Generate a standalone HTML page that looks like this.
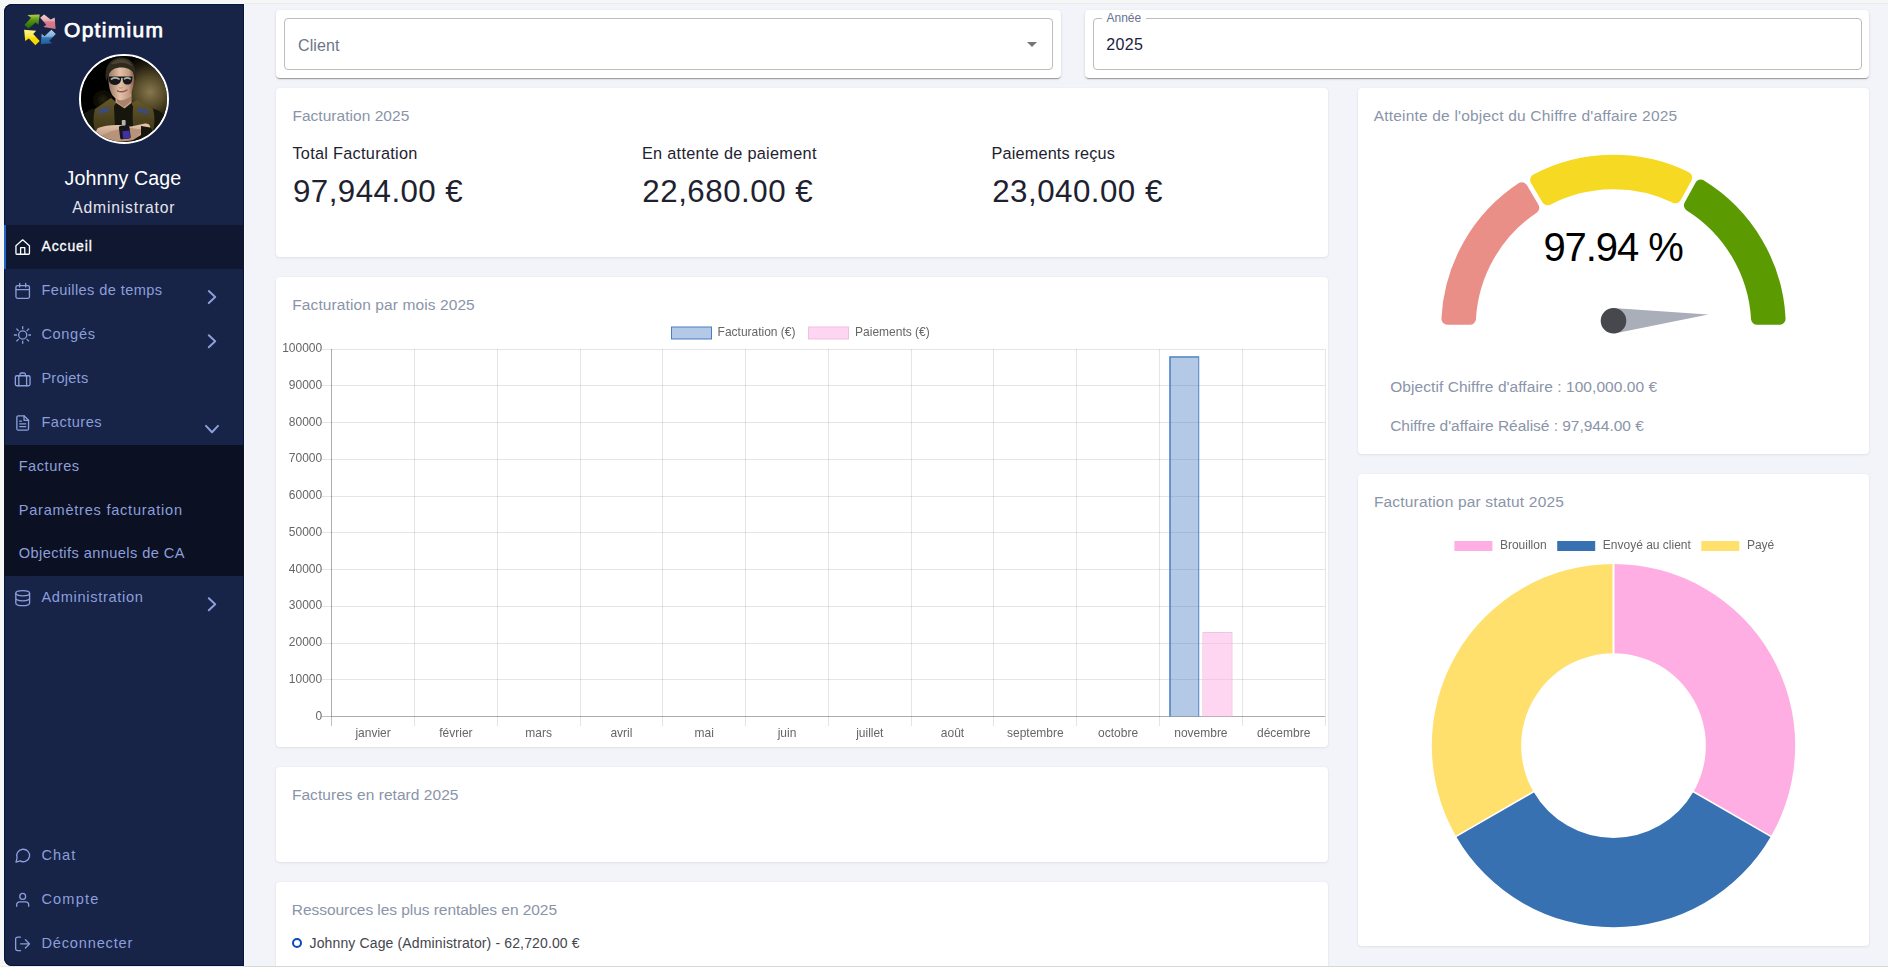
<!DOCTYPE html>
<html lang="fr">
<head>
<meta charset="utf-8">
<title>Optimium - Accueil</title>
<style>
*{box-sizing:border-box;margin:0;padding:0}
html,body{width:1888px;height:967px;overflow:hidden}
body{position:relative;background:#f6f6f6;font-family:"Liberation Sans",sans-serif;-webkit-font-smoothing:antialiased}
.page{position:absolute;left:245px;top:4px;width:1643px;height:962px;background:#f2f4f9}
.topline{position:absolute;left:244px;top:3px;width:1644px;height:1px;background:#ececee}
.sideline{position:absolute;left:244px;top:3px;width:1px;height:963px;background:#fff}
.bottomline{position:absolute;left:0;top:966px;width:1888px;height:1px;z-index:5;background:linear-gradient(90deg,#ececeb 0,#ececeb 243px,#d8d8d7 245px,#d8d8d7 100%)}
.sidebar{position:absolute;left:4px;top:4px;width:240px;height:962px;background:#172347;border-radius:8px 0 0 8px;box-shadow:inset 0 0 0 1px #07123d,0 0 0 1px #f9f9f7;overflow:hidden}
.t{position:absolute;white-space:nowrap;line-height:1;font-weight:normal;text-decoration:none;display:block}
.abs{position:absolute;display:block}
.chart{will-change:transform}
.brand .logo{position:absolute;left:20px;top:9.500px}
.avatar{position:absolute;left:75px;top:50px;width:90px;height:90px;border-radius:50%;border:2px solid #fff;overflow:hidden;background:#000}
.avatar svg{display:block}
.item.active{position:absolute;left:0;width:240px;background:#0f1731;border-left:2px solid #1f66c9}
.sub{position:absolute;left:0;width:240px;background:#0b1023}
.ic{position:absolute;width:18px;height:18px;display:block}
.chev{position:absolute;left:0;top:0;display:block}
.card,.paper{position:absolute;background:#fff;border-radius:4px}
.card{box-shadow:0 1px 3px rgba(0,0,0,.075),0 0 2px rgba(0,0,0,.045)}
.paper{box-shadow:0 2px 1px -1px rgba(0,0,0,.2),0 1px 1px 0 rgba(0,0,0,.14),0 1px 3px 0 rgba(0,0,0,.12)}
.outline{position:absolute;border:1px solid #bdbdbd;border-radius:4px}
.notch{position:absolute;background:#fff}
.bullet{position:absolute;width:10px;height:10px;border:2px solid #0b49b8;border-radius:50%}
</style>
</head>
<body>
<div class="page"></div><div class="topline"></div><div class="sideline"></div><div class="bottomline"></div>
<aside class="sidebar">
<div class="brand">
<svg class="logo" width="32" height="32" viewBox="0 0 32 32">
<defs>
<linearGradient id="gG" x1="0" y1="0" x2="0" y2="1"><stop offset="0" stop-color="#b4d04a"/><stop offset=".35" stop-color="#5d9a17"/><stop offset="1" stop-color="#1d6400"/></linearGradient>
<linearGradient id="gP" x1="0" y1="0" x2="0" y2="1"><stop offset="0" stop-color="#f6cfd5"/><stop offset=".45" stop-color="#e7a3ae"/><stop offset=".5" stop-color="#d47c8b"/><stop offset="1" stop-color="#cf7685"/></linearGradient>
<linearGradient id="gB" x1="0" y1="0" x2="0" y2="1"><stop offset="0" stop-color="#b7d3ee"/><stop offset=".45" stop-color="#7fb0da"/><stop offset=".55" stop-color="#3577b3"/><stop offset="1" stop-color="#1c5c9c"/></linearGradient>
<linearGradient id="gY" x1="0" y1="0" x2="0" y2="1"><stop offset="0" stop-color="#fff38c"/><stop offset=".45" stop-color="#fde640"/><stop offset=".55" stop-color="#f7dc00"/><stop offset="1" stop-color="#f3d400"/></linearGradient>
</defs>
<path fill="url(#gG)" d="M15.7.6 3.3 1 7 3.8.5 11l4.1 3.7 7-6.1 2.8 2.2z"/>
<path fill="url(#gP)" d="M31.6 14.9 30.7 3.6l-4.1 1.8L20.1.6l-3.9 3.2 6 7-2.800 2.200z"/>
<path fill="url(#gB)" d="M16.800 30.300 17.700 19.700l2.800 2.600 6.900-6.500 4.400 4.100-6.700 7 3.200 2.400z"/>
<path fill="url(#gY)" d="M.1 15.800 12.200 16.700 9.200 20.100l6.500 6.800-4.300 4.300-6.500-6.700-3.700 2.600z"/>
</svg>
<div class="t" id="t_brand" style="left:60.0px;top:15.00px;font-size:21px;color:#fff;letter-spacing:1.299px;-webkit-text-stroke:.75px #fff;">Optimium</div>
</div>
<div class="avatar">
<svg width="86" height="86" viewBox="0 0 86 86">
<defs>
<radialGradient id="avbg" cx="69" cy="36" r="36" gradientUnits="userSpaceOnUse"><stop offset="0" stop-color="#85774c"/><stop offset=".4" stop-color="#574c2a"/><stop offset=".75" stop-color="#221d0f"/><stop offset="1" stop-color="#030302"/></radialGradient>
<radialGradient id="avbg2" cx="22" cy="44" r="14" gradientUnits="userSpaceOnUse"><stop offset="0" stop-color="#2c2610"/><stop offset="1" stop-color="#030302" stop-opacity="0"/></radialGradient>
<linearGradient id="skin" x1="0" y1="0" x2="1" y2="0"><stop offset="0" stop-color="#9c7660"/><stop offset=".45" stop-color="#e3c0a8"/><stop offset=".8" stop-color="#c59c83"/><stop offset="1" stop-color="#83604c"/></linearGradient>
<linearGradient id="arm" x1="0" y1="0" x2="0" y2="1"><stop offset="0" stop-color="#e6c6ae"/><stop offset="1" stop-color="#b08a72"/></linearGradient>
<linearGradient id="vest" x1="0" y1="0" x2="0" y2="1"><stop offset="0" stop-color="#64582a"/><stop offset="1" stop-color="#3f3719"/></linearGradient>
<filter id="soft" x="-5%" y="-5%" width="110%" height="110%"><feGaussianBlur stdDeviation=".45"/></filter>
</defs>
<g filter="url(#soft)">
<rect x="-4" y="-4" width="94" height="94" fill="#030302"/>
<rect width="86" height="86" fill="url(#avbg)"/>
<rect width="86" height="86" fill="url(#avbg2)"/>
<path d="M1 62c2-6 8-9 15-10l16-5h20l16 5c8 1 14 4 17 10v24H1z" fill="#14140e"/>
<path d="M14 53 30 42l5 4-1 26-20 3c-2-7-2-15 0-22z" fill="url(#vest)"/>
<path d="M72 53 56 44l-5 3 1 25 20 3c2-7 2-15 0-22z" fill="url(#vest)"/>
<path d="M17.500 53.500 28 51v4.500l-10.500 2.500zM67.500 54 57 51.500V56l10.500 2.500z" fill="#3d4b7c"/>
<path d="M33 50l3-4h12l4 4-1.500 22H34z" fill="#14140f"/>
<path d="M34.500 33h16v14l-7 5.500-9-6z" fill="#c69e86"/>
<path d="M36 40c3 4 9 4.500 14 0v5l-7 6-7-5z" fill="#a9826c"/>
<path d="M27.500 22c0-9 5-14 12.500-14s13 5 13 14c0 8-2 14-5 18-2.500 3-5 4.200-8 4.200s-6-1.500-8.500-5c-2.500-4-4-9-4-17.200z" fill="url(#skin)"/>
<path d="M25.500 25C22 11 30 1.500 40 1.500c9 0 16.500 6 14.500 23.500l-2-8c-3-4-7-5.500-12.500-5.500S30.500 13.500 28 18z" fill="#2f2a1f"/>
<path d="M30 8c3-4 8-5.500 13-4.500 4 1 7 3.500 8.500 7-4-3-8-4-12.500-3.500-3.500.4-6.500 1.500-9 1z" fill="#4b4334"/>
<path d="M27.800 21h12.200c.6 4.800-1.400 7.800-6 7.900-4.500.1-6.800-3-6.200-7.900zM41.800 21h9.400c.5 4.600-1 7.600-4.800 7.600-3.700 0-5.100-3-4.600-7.600z" fill="#14181a"/>
<path d="M27.500 21.200h24" stroke="#14181a" stroke-width="1.400"/>
<path d="M30.500 23c2.500-1.400 5-1.400 7.500 0M43.500 22.800c1.800-1.200 3.800-1.200 5.600 0" stroke="#a9b4ad" stroke-width="1.700" fill="none" stroke-linecap="round"/>
<path d="M36.500 34.800c3 1.400 6.500 1.200 9.500-.8" stroke="#8a594d" stroke-width="1.300" fill="none" stroke-linecap="round"/>
<path d="M38 31.500c1 .8 2.600.8 3.600 0" stroke="#b58c77" stroke-width="1" fill="none"/>
<path d="M17 72c9-3.500 22-4 33-1.500l14-3c4-.5 7 3 4 6.500L52 84c-11 2.500-24 2.500-35-1-3-3-3-8 0-11z" fill="url(#arm)"/>
<path d="M20 80c8-5 20-8 30-8l13 2-9 8c-11 3-24 2.500-34-2z" fill="#b9927a"/>
<path d="M60 70l9 1.500c3 2 3 6 0 8l-9 1z" fill="#15150f"/>
<rect x="38.500" y="69.500" width="10.500" height="13.500" rx="1.500" transform="rotate(-7 43.500 76)" fill="#17161c"/>
<rect x="41.500" y="75" width="7" height="7.500" transform="rotate(-7 43.500 76)" fill="#3f33a4"/>
<rect x="40.800" y="64" width="3.800" height="5.400" rx=".8" fill="#b4b4ae"/>
</g>
</svg></div>
<div class="t" id="t_name" style="left:60.5px;top:165.00px;font-size:19.6px;color:#fff;letter-spacing:0.108px;">Johnny Cage</div>
<div class="t" id="t_role" style="left:68.2px;top:196.01px;font-size:15.7px;color:#e3e5ec;letter-spacing:0.822px;">Administrator</div>
<nav>
<div class="item active" style="top:221px;height:44px"></div>
<div class="sub" style="top:441px;height:131px"></div>
<svg class="ic" style="left:9px;top:234px" viewBox="-0.93 -0.07 24 24" fill="none" stroke="#fff" stroke-width="1.75" stroke-linecap="round" stroke-linejoin="round"><path d="M3 10.2 12 2.400l9 7.800v10.200a1.200 1.200 0 0 1-1.200 1.200H4.200A1.200 1.200 0 0 1 3 20.400z"/><path d="M9.200 21.600v-8.800h5.600v8.800"/></svg>
<a class="t" id="t_nav0" style="left:37.4px;top:235.01px;font-size:14px;color:#fff;letter-spacing:0.901px;-webkit-text-stroke:.3px #fff;">Accueil</a>
<svg class="ic" style="left:9px;top:278px" viewBox="-0.93 -0.00 24 24" fill="none" stroke="#8c9fdb" stroke-width="1.75" stroke-linecap="round" stroke-linejoin="round"><rect x="3" y="4.800" width="18" height="17" rx="2"/><path d="M3 10.100h18M8 2v4.600M16 2v4.600"/></svg>
<a class="t" id="t_nav1" style="left:37.4px;top:279.02px;font-size:14.6px;color:#8c9fdb;letter-spacing:0.389px;">Feuilles de temps</a>
<svg class="ic" style="left:9px;top:322px" viewBox="-0.93 -0.00 24 24" fill="none" stroke="#8c9fdb" stroke-width="1.75" stroke-linecap="round" stroke-linejoin="round"><circle cx="12" cy="12" r="5.400"/><path d="M12 .9v2.900M12 20.200v2.900M.9 12h2.900M20.200 12h2.900M4.100 4.100l2.100 2.100M17.800 17.800l2.100 2.100M4.100 19.900l2.100-2.100M17.800 6.200l2.100-2.100"/></svg>
<a class="t" id="t_nav2" style="left:37.4px;top:323.02px;font-size:14.6px;color:#8c9fdb;letter-spacing:0.652px;">Congés</a>
<svg class="ic" style="left:9px;top:366px" viewBox="-0.93 -0.27 24 24" fill="none" stroke="#8c9fdb" stroke-width="1.75" stroke-linecap="round" stroke-linejoin="round"><rect x="2.200" y="7.400" width="19.600" height="13.300" rx="2"/><path d="M8.400 7.400V5.500a1.800 1.800 0 0 1 1.800-1.800h3.600a1.800 1.800 0 0 1 1.800 1.800v1.900M6.800 7.400v13.300M17.200 7.400v13.300"/></svg>
<a class="t" id="t_nav3" style="left:37.4px;top:367.02px;font-size:14.6px;color:#8c9fdb;letter-spacing:0.227px;">Projets</a>
<svg class="ic" style="left:9px;top:410px" viewBox="-0.93 -0.00 24 24" fill="none" stroke="#8c9fdb" stroke-width="1.75" stroke-linecap="round" stroke-linejoin="round"><path d="M13.800 2.400H6.200a2 2 0 0 0-2 2v15.200a2 2 0 0 0 2 2h11.600a2 2 0 0 0 2-2V8.400z"/><path d="M13.800 2.400v6h6"/><path d="M8 9.600h2.400M8 13.200h8M8 16.900h8"/></svg>
<a class="t" id="t_nav4" style="left:37.4px;top:411.02px;font-size:14.6px;color:#8c9fdb;letter-spacing:0.496px;">Factures</a>
<svg class="ic" style="left:9px;top:585px" viewBox="-0.93 -0.13 24 24" fill="none" stroke="#8c9fdb" stroke-width="1.75" stroke-linecap="round" stroke-linejoin="round"><ellipse cx="12" cy="5.600" rx="9.200" ry="3.500"/><path d="M2.800 5.600v12.800c0 1.950 4.100 3.600 9.200 3.600s9.200-1.650 9.200-3.600V5.600M2.800 12c0 1.950 4.100 3.600 9.200 3.600s9.200-1.650 9.200-3.600"/></svg>
<a class="t" id="t_nav5" style="left:37.4px;top:586.02px;font-size:14.6px;color:#8c9fdb;letter-spacing:0.699px;">Administration</a>
<svg class="ic" style="left:9px;top:842px" viewBox="-0.93 -1.20 24 24" fill="none" stroke="#8c9fdb" stroke-width="1.75" stroke-linecap="round" stroke-linejoin="round"><path d="M8.560 18.730 3.100 20.400l1.420-6.160A8.600 8.300 0 1 1 8.560 18.730z"/></svg>
<a class="t" id="t_nav6" style="left:37.4px;top:844.02px;font-size:14.6px;color:#8c9fdb;letter-spacing:0.992px;">Chat</a>
<svg class="ic" style="left:9px;top:886px" viewBox="-0.93 -1.20 24 24" fill="none" stroke="#8c9fdb" stroke-width="1.75" stroke-linecap="round" stroke-linejoin="round"><circle cx="12" cy="7.300" r="3.900"/><path d="M4 20.500v-2.200a3.600 3.600 0 0 1 3.600-3.600h8.800a3.600 3.600 0 0 1 3.600 3.600v2.200"/></svg>
<a class="t" id="t_nav7" style="left:37.4px;top:888.02px;font-size:14.6px;color:#8c9fdb;letter-spacing:1.162px;">Compte</a>
<svg class="ic" style="left:9px;top:930px" viewBox="-0.93 -1.13 24 24" fill="none" stroke="#8c9fdb" stroke-width="1.75" stroke-linecap="round" stroke-linejoin="round"><path d="M9.100 2.950H5.100a2.500 2.500 0 0 0-2.500 2.500v13.100a2.500 2.500 0 0 0 2.500 2.500h4"/><path d="M9.200 12h11.700M15.600 6.500l5.500 5.500-5.500 5.500"/></svg>
<a class="t" id="t_nav8" style="left:37.4px;top:932.02px;font-size:14.6px;color:#8c9fdb;letter-spacing:0.824px;">Déconnecter</a>
<a class="t" id="t_sub0" style="left:14.7px;top:455.02px;font-size:14.6px;color:#8c9fdb;letter-spacing:0.523px;">Factures</a>
<a class="t" id="t_sub1" style="left:14.7px;top:499.02px;font-size:14.6px;color:#8c9fdb;letter-spacing:0.747px;">Paramètres facturation</a>
<a class="t" id="t_sub2" style="left:14.7px;top:542.02px;font-size:14.6px;color:#8c9fdb;letter-spacing:0.415px;">Objectifs annuels de CA</a>
<svg class="chev" width="240" height="962" fill="none" stroke="#8c9fdb" stroke-width="2" stroke-linecap="round" stroke-linejoin="round"><path d="M204.8 287.1l6.4 6-6.4 6"/><path d="M204.8 331.2l6.4 6-6.4 6"/><path d="M202.0 421.9l6 6.4 6-6.4"/><path d="M204.8 594.2l6.4 6-6.4 6"/></svg>
</nav>
</aside>
<main>
<section class="paper" style="left:276px;top:10px;width:785px;height:68.4px;">
<div class="outline" style="left:8px;top:8px;width:768.6px;height:51.6px"></div>
<label class="t" id="t_client" style="left:22.0px;top:28.00px;font-size:16px;color:#6e7686;letter-spacing:0.090px;">Client</label>
<svg class="abs" style="left:751px;top:31.500px" width="10" height="5"><path d="M0 0h10L5 5z" fill="#757575"/></svg>
</section>
<section class="paper" style="left:1085px;top:10px;width:784px;height:68.4px;">
<div class="outline" style="left:8.2px;top:8px;width:768.5px;height:51.6px"></div>
<div class="notch" style="left:17px;top:6px;width:44px;height:5px"></div>
<label class="t" id="t_annee" style="left:21.6px;top:2.01px;font-size:12px;color:#66738f;letter-spacing:-0.045px;">Année</label>
<div class="t" id="t_year" style="left:21.2px;top:27.00px;font-size:16px;color:#1a2240;letter-spacing:0.345px;">2025</div>
</section>
<section class="card" style="left:276px;top:88px;width:1052px;height:169px;">
<h3 class="t" id="t_fact" style="left:16.4px;top:20.00px;font-size:15.5px;color:#8a94a9;letter-spacing:0.037px;">Facturation 2025</h3>
<div class="t" id="t_kl0" style="left:16.4px;top:57.01px;font-size:16.3px;color:#1e2230;letter-spacing:0.286px;">Total Facturation</div>
<div class="t" id="t_kv0" style="left:17.0px;top:88.00px;font-size:31.3px;color:#1e2230;letter-spacing:0.443px;">97,944.00 €</div>
<div class="t" id="t_kl1" style="left:365.9px;top:57.01px;font-size:16.3px;color:#1e2230;letter-spacing:0.294px;">En attente de paiement</div>
<div class="t" id="t_kv1" style="left:366.3px;top:88.00px;font-size:31.3px;color:#1e2230;letter-spacing:0.510px;">22,680.00 €</div>
<div class="t" id="t_kl2" style="left:715.5px;top:57.01px;font-size:16.3px;color:#1e2230;letter-spacing:0.154px;">Paiements reçus</div>
<div class="t" id="t_kv2" style="left:716.2px;top:88.00px;font-size:31.3px;color:#1e2230;letter-spacing:0.482px;">23,040.00 €</div>
</section>
<section class="card" style="left:276px;top:277px;width:1052px;height:469.6px;">
<h3 class="t" id="t_bct" style="left:16.3px;top:20.00px;font-size:15.5px;color:#8a94a9;letter-spacing:0.099px;">Facturation par mois 2025</h3>
<svg class="abs chart" style="left:0;top:0" width="1052" height="469.6" viewBox="276 277 1052 469.6" font-family="Liberation Sans, sans-serif" font-size="12" fill="#666">
<g shape-rendering="crispEdges" fill="none"><path d="M321.5 716.5H1325.5" stroke="rgba(0,0,0,.25)"/><path d="M321.5 679.5H1325.5" stroke="rgba(0,0,0,.1)"/><path d="M321.5 643.5H1325.5" stroke="rgba(0,0,0,.1)"/><path d="M321.5 606.5H1325.5" stroke="rgba(0,0,0,.1)"/><path d="M321.5 569.5H1325.5" stroke="rgba(0,0,0,.1)"/><path d="M321.5 532.5H1325.5" stroke="rgba(0,0,0,.1)"/><path d="M321.5 496.5H1325.5" stroke="rgba(0,0,0,.1)"/><path d="M321.5 459.5H1325.5" stroke="rgba(0,0,0,.1)"/><path d="M321.5 422.5H1325.5" stroke="rgba(0,0,0,.1)"/><path d="M321.5 385.5H1325.5" stroke="rgba(0,0,0,.1)"/><path d="M321.5 349.5H1325.5" stroke="rgba(0,0,0,.1)"/><path d="M331.5 349.5V726.5" stroke="rgba(0,0,0,.25)"/><path d="M414.5 349.5V726.5" stroke="rgba(0,0,0,.1)"/><path d="M497.5 349.5V726.5" stroke="rgba(0,0,0,.1)"/><path d="M580.5 349.5V726.5" stroke="rgba(0,0,0,.1)"/><path d="M662.5 349.5V726.5" stroke="rgba(0,0,0,.1)"/><path d="M745.5 349.5V726.5" stroke="rgba(0,0,0,.1)"/><path d="M828.5 349.5V726.5" stroke="rgba(0,0,0,.1)"/><path d="M911.5 349.5V726.5" stroke="rgba(0,0,0,.1)"/><path d="M993.5 349.5V726.5" stroke="rgba(0,0,0,.1)"/><path d="M1076.5 349.5V726.5" stroke="rgba(0,0,0,.1)"/><path d="M1159.5 349.5V726.5" stroke="rgba(0,0,0,.1)"/><path d="M1242.5 349.5V726.5" stroke="rgba(0,0,0,.1)"/><path d="M1325.5 349.5V726.5" stroke="rgba(0,0,0,.1)"/><path d="M331.5 349.5V716.5M331.5 716.5H1325.5" stroke="rgba(0,0,0,.1)"/></g>
<g><text x="322.2" y="719.6" text-anchor="end">0</text><text x="322.2" y="682.9" text-anchor="end">10000</text><text x="322.2" y="646.1" text-anchor="end">20000</text><text x="322.2" y="609.4" text-anchor="end">30000</text><text x="322.2" y="572.6" text-anchor="end">40000</text><text x="322.2" y="535.9" text-anchor="end">50000</text><text x="322.2" y="499.1" text-anchor="end">60000</text><text x="322.2" y="462.4" text-anchor="end">70000</text><text x="322.2" y="425.6" text-anchor="end">80000</text><text x="322.2" y="388.9" text-anchor="end">90000</text><text x="322.2" y="352.1" text-anchor="end">100000</text></g>
<text x="373.1" y="736.7" text-anchor="middle">janvier</text>
<text x="455.9" y="736.7" text-anchor="middle">février</text>
<text x="538.6" y="736.7" text-anchor="middle">mars</text>
<text x="621.4" y="736.7" text-anchor="middle">avril</text>
<text x="704.2" y="736.7" text-anchor="middle">mai</text>
<text x="787.0" y="736.7" text-anchor="middle">juin</text>
<text x="869.8" y="736.7" text-anchor="middle">juillet</text>
<text x="952.5" y="736.7" text-anchor="middle">août</text>
<text x="1035.3" y="736.7" text-anchor="middle">septembre</text>
<text x="1118.1" y="736.7" text-anchor="middle">octobre</text>
<text x="1200.9" y="736.7" text-anchor="middle">novembre</text>
<text x="1283.7" y="736.7" text-anchor="middle">décembre</text>
<path fill-rule="evenodd" d="M1169.23 356.21H1199.23V716.6H1169.23ZM1170.83 357.71V716.6H1198.23V357.71Z" fill="#4a7dc4"/><rect x="1170.83" y="357.71" width="27.40" height="358.89" fill="rgba(54,112,190,.38)"/>
<path fill-rule="evenodd" d="M1202.55 632.23H1232.35V716.6H1202.55ZM1203.25 632.93V716.6H1231.65V632.93Z" fill="#e9b5d8"/><rect x="1203.25" y="632.93" width="28.40" height="83.67" fill="rgba(255,170,225,.48)"/>
<rect x="671.5" y="327" width="40" height="12" fill="rgba(54,112,190,.38)" stroke="#4a7dc4"/>
<text x="717.6" y="336.4">Facturation (€)</text>
<rect x="808.5" y="327" width="40" height="12" fill="rgba(255,170,225,.48)" stroke="#efc0e0"/>
<text x="855.1" y="336.4">Paiements (€)</text>
</svg>
</section>
<section class="card" style="left:276px;top:767px;width:1052px;height:94.6px;">
<h3 class="t" id="t_late" style="left:15.9px;top:20.00px;font-size:15.5px;color:#8a94a9;letter-spacing:0.052px;">Factures en retard 2025</h3>
</section>
<section class="card" style="left:276px;top:882px;width:1052px;height:100px;border-bottom-left-radius:0;border-bottom-right-radius:0;">
<h3 class="t" id="t_res" style="left:15.8px;top:20.00px;font-size:15.5px;color:#8a94a9;letter-spacing:-0.052px;">Ressources les plus rentables en 2025</h3>
<span class="bullet" style="left:16px;top:56px"></span>
<div class="t" id="t_res1" style="left:33.5px;top:54.01px;font-size:14px;color:#44464c;letter-spacing:0.138px;">Johnny Cage (Administrator) - 62,720.00 €</div>
</section>
<section class="card" style="left:1358px;top:88px;width:511px;height:366px;">
<h3 class="t" id="t_gt" style="left:15.7px;top:20.00px;font-size:15.5px;color:#8a94a9;letter-spacing:0.191px;">Atteinte de l'object du Chiffre d'affaire 2025</h3>
<svg class="abs" style="left:0;top:0" width="511" height="366" viewBox="1358 88 511 366">
<path d="M1447.41 318.80A166.30 166.30 0 0 1 1521.81 188.36L1533.28 207.76A143.80 143.80 0 0 0 1469.94 318.80Z" fill="#ea8f88" stroke="#ea8f88" stroke-width="12.0" stroke-linejoin="round"/>
<path d="M1536.10 179.91A166.30 166.30 0 0 1 1686.24 177.55L1675.39 197.30A143.80 143.80 0 0 0 1547.57 199.31Z" fill="#f5d923" stroke="#f5d923" stroke-width="12.0" stroke-linejoin="round"/>
<path d="M1700.79 185.55A166.30 166.30 0 0 1 1779.59 318.80L1757.06 318.80A143.80 143.80 0 0 0 1689.93 205.30Z" fill="#5b9a00" stroke="#5b9a00" stroke-width="12.0" stroke-linejoin="round"/>
<path d="M1612.67 307.93L1708.30 314.56L1614.33 333.47Z" fill="#a9aeb9"/>
<circle cx="1613.50" cy="320.70" r="12.8" fill="#47484e"/>
</svg>
<div class="t" id="t_gv" style="left:185.4px;top:139.01px;font-size:40px;color:#000;letter-spacing:-1.074px;">97.94 %</div>
<div class="t" id="t_g1" style="left:32.2px;top:291.00px;font-size:15.5px;color:#8a94a9;letter-spacing:0.068px;">Objectif Chiffre d'affaire : 100,000.00 €</div>
<div class="t" id="t_g2" style="left:32.2px;top:330.00px;font-size:15.5px;color:#8a94a9;letter-spacing:-0.033px;">Chiffre d'affaire Réalisé : 97,944.00 €</div>
</section>
<section class="card" style="left:1358px;top:474px;width:511px;height:472px;">
<h3 class="t" id="t_dt" style="left:15.9px;top:20.00px;font-size:15.5px;color:#8a94a9;letter-spacing:0.182px;">Facturation par statut 2025</h3>
<svg class="abs chart" style="left:0;top:0" width="511" height="472" viewBox="1358 474 511 472" font-family="Liberation Sans, sans-serif" font-size="12" fill="#666">
<path d="M1613.50 563.90A181.7 181.7 0 0 1 1770.86 836.45L1693.48 791.77A92.35 92.35 0 0 0 1613.50 653.25Z" fill="#ffaee3"/>
<path d="M1770.86 836.45A181.7 181.7 0 0 1 1456.14 836.45L1533.52 791.77A92.35 92.35 0 0 0 1693.48 791.77Z" fill="#3771b1"/>
<path d="M1456.14 836.45A181.7 181.7 0 0 1 1613.50 563.90L1613.50 653.25A92.35 92.35 0 0 0 1533.52 791.77Z" fill="#ffe06c"/>
<path d="M1613.50 655.25L1613.50 561.90" stroke="#fff" stroke-width="2.0"/>
<path d="M1691.75 790.77L1772.59 837.45" stroke="#fff" stroke-width="1.5"/>
<path d="M1535.25 790.77L1454.41 837.45" stroke="#fff" stroke-width="1.5"/>
<rect x="1453.4" y="540" width="40" height="12" fill="#ffaee3" stroke="#fff" stroke-width="2"/>
<text x="1499.9" y="548.9">Brouillon</text>
<rect x="1556.2" y="540" width="40" height="12" fill="#3771b1" stroke="#fff" stroke-width="2"/>
<text x="1602.8" y="548.9">Envoyé au client</text>
<rect x="1700.3" y="540" width="40" height="12" fill="#ffe06c" stroke="#fff" stroke-width="2"/>
<text x="1746.9" y="548.9">Payé</text>
</svg>
</section>
</main>
</body>
</html>
